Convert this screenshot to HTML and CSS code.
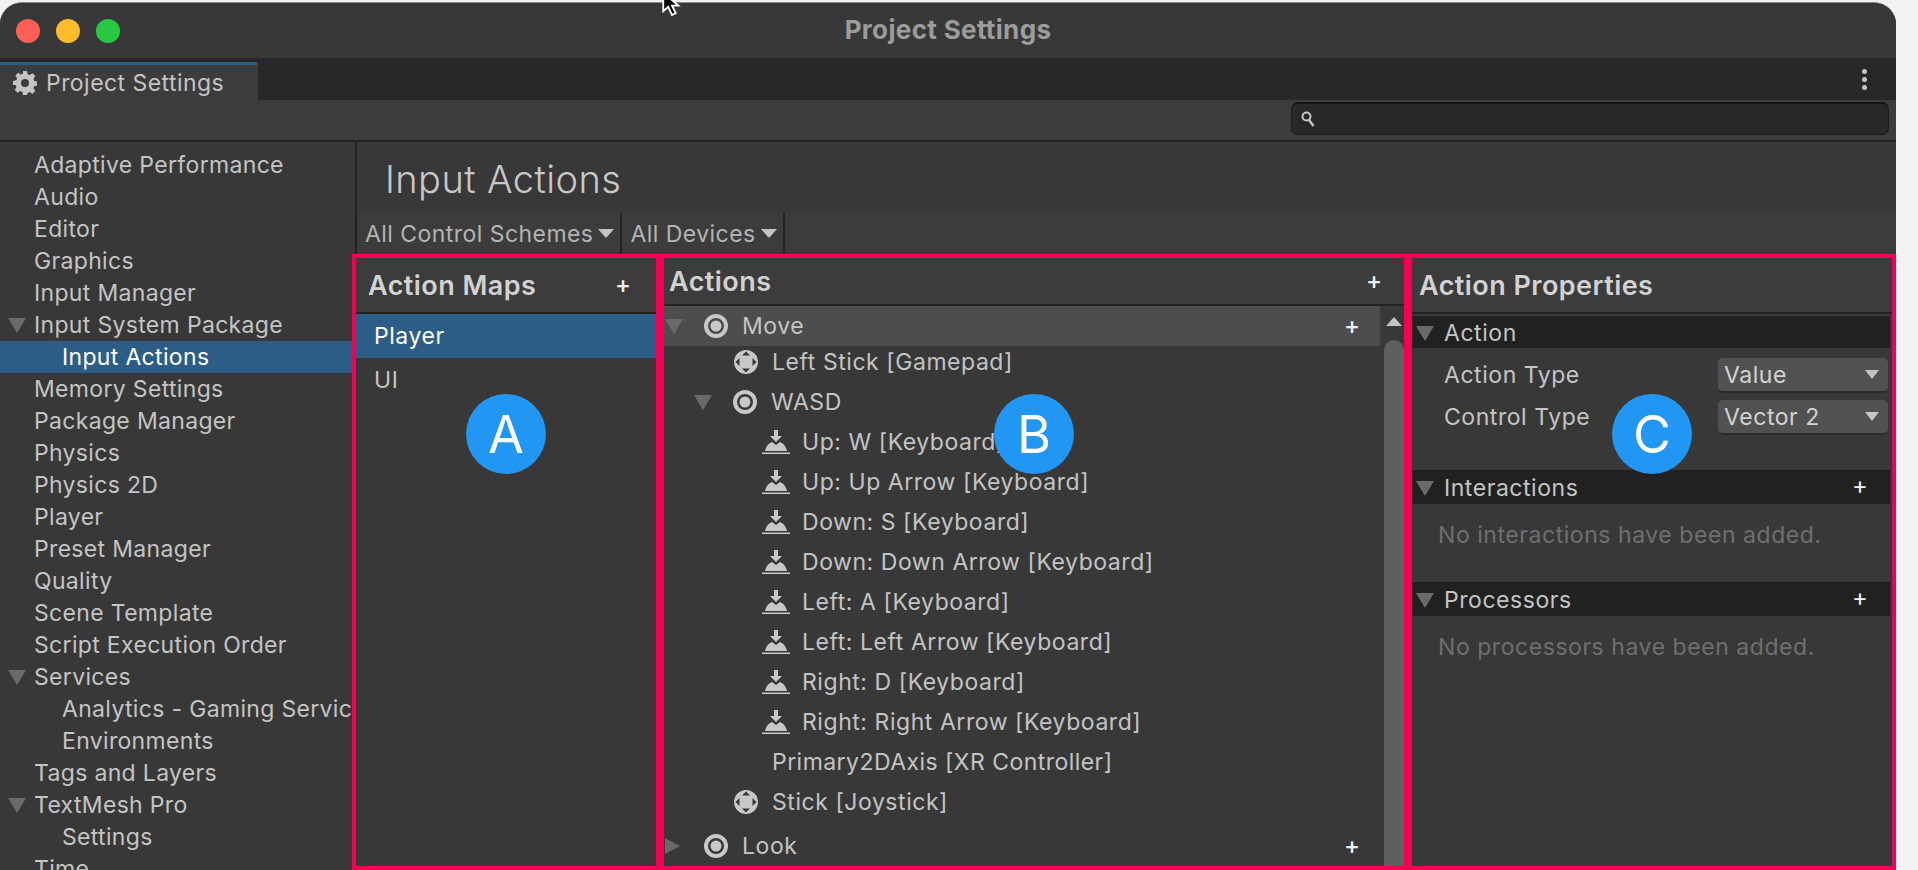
FILE: index.html
```html
<!DOCTYPE html>
<html lang="en">
<head>
    <meta charset="UTF-8">
    <title>Project Settings</title>
    <link rel="stylesheet" href="styles.css">
</head>
<body>
    <svg class="defs" width="0" height="0">
        <symbol id="i-ring" viewBox="0 0 24 24">
            <circle cx="12" cy="12" r="10" fill="none" stroke="#c8c8c8" stroke-width="4"/>
            <circle cx="12" cy="12" r="5.5" fill="#c8c8c8"/>
        </symbol>
        <symbol id="i-stick" viewBox="0 0 24 24">
            <circle cx="12" cy="12" r="12" fill="#c8c8c8"/>
            <path d="M12 1.500 16 5.500H8zM12 22.500 8 18.500h8zM1.500 12 5.500 8v8zM22.500 12 18.500 16V8z" fill="#383838"/>
        </symbol>
        <symbol id="i-key" viewBox="0 0 28 24">
            <path d="M12 0h4v6h4l-6 6-6-6h4z" fill="#c8c8c8"/>
            <path d="M3 21c1-5 4-8 7-9l4 3 4-3c3 1 6 4 7 9z" fill="#c8c8c8"/>
            <rect y="22.500" width="28" height="1.500" fill="#c8c8c8"/>
        </symbol>
    </svg>

    <div class="window">
        <div class="titlebar">
            <span class="light red"></span>
            <span class="light yellow"></span>
            <span class="light green"></span>
            <div class="title">Project Settings</div>
        </div>

        <div class="tabbar">
            <div class="tab">
                <svg class="gear" viewBox="0 0 24 24"><path fill-rule="evenodd" d="M10 0h4l.7 3.300 2 .8L19.500 2.300l2.800 2.800-1.800 2.800.8 2 3.300.7v4l-3.300.7-.8 2 1.800 2.800-2.800 2.800-2.800-1.800-2 .8L14 24h-4l-.7-3.300-2-.8-2.800 1.800-2.800-2.800 1.800-2.800-.8-2L0 14v-4l3.300-.7.8-2-1.800-2.800 2.800-2.800 2.800 1.800 2-.8zM12 8a4 4 0 1 0 0 8 4 4 0 0 0 0-8z" fill="#c4c4c4"/></svg>
                Project Settings
            </div>
            <div class="kebab"><i></i><i></i><i></i></div>
        </div>

        <div class="toolbar">
            <div class="search">
                <svg class="search-icon" viewBox="0 0 14 16"><circle cx="5.500" cy="5.500" r="4" fill="none" stroke="#c4c4c4" stroke-width="2"/><path d="M8 9l4.500 6" stroke="#c4c4c4" stroke-width="2.500"/></svg>
            </div>
        </div>

        <div class="main">
            <div class="sidebar">
                <div class="nav-item">Adaptive Performance</div>
                <div class="nav-item">Audio</div>
                <div class="nav-item">Editor</div>
                <div class="nav-item">Graphics</div>
                <div class="nav-item">Input Manager</div>
                <div class="nav-item"><span class="twirl down"></span>Input System Package</div>
                <div class="nav-item sub active">Input Actions</div>
                <div class="nav-item">Memory Settings</div>
                <div class="nav-item">Package Manager</div>
                <div class="nav-item">Physics</div>
                <div class="nav-item">Physics 2D</div>
                <div class="nav-item">Player</div>
                <div class="nav-item">Preset Manager</div>
                <div class="nav-item">Quality</div>
                <div class="nav-item">Scene Template</div>
                <div class="nav-item">Script Execution Order</div>
                <div class="nav-item"><span class="twirl down"></span>Services</div>
                <div class="nav-item sub">Analytics - Gaming Services</div>
                <div class="nav-item sub">Environments</div>
                <div class="nav-item">Tags and Layers</div>
                <div class="nav-item"><span class="twirl down"></span>TextMesh Pro</div>
                <div class="nav-item sub">Settings</div>
                <div class="nav-item">Time</div>
            </div>

            <div class="content">
                <div class="content-head">
                    <h1>Input Actions</h1>
                    <div class="filters">
                        <div class="filter first">All Control Schemes<span class="caret"></span></div>
                        <div class="filter">All Devices<span class="caret"></span></div>
                    </div>
                </div>

                <div class="panels">
                    <section class="panel maps">
                        <div class="panel-head">
                            <h2>Action Maps</h2>
                            <span class="plus">+</span>
                        </div>
                        <div class="map-item active">Player</div>
                        <div class="map-item">UI</div>
                        <span class="badge">A</span>
                    </section>

                    <section class="panel actions">
                        <div class="panel-head short">
                            <h2>Actions</h2>
                            <span class="plus">+</span>
                        </div>
                        <div class="tree-wrap">
                            <div class="tree">
                                <div class="row action active">
                                    <span class="slot"><span class="twirl down"></span></span>
                                    <svg class="ico"><use href="#i-ring"/></svg>
                                    <span>Move</span>
                                    <span class="plus">+</span>
                                </div>
                                <div class="bindings">
                                    <div class="row composite-child"><svg class="ico"><use href="#i-stick"/></svg><span>Left Stick [Gamepad]</span></div>
                                    <div class="row wasd">
                                        <span class="slot"><span class="twirl down"></span></span>
                                        <svg class="ico"><use href="#i-ring"/></svg>
                                        <span>WASD</span>
                                    </div>
                                    <div class="row key"><svg class="ico-key"><use href="#i-key"/></svg><span>Up: W [Keyboard]</span></div>
                                    <div class="row key"><svg class="ico-key"><use href="#i-key"/></svg><span>Up: Up Arrow [Keyboard]</span></div>
                                    <div class="row key"><svg class="ico-key"><use href="#i-key"/></svg><span>Down: S [Keyboard]</span></div>
                                    <div class="row key"><svg class="ico-key"><use href="#i-key"/></svg><span>Down: Down Arrow [Keyboard]</span></div>
                                    <div class="row key"><svg class="ico-key"><use href="#i-key"/></svg><span>Left: A [Keyboard]</span></div>
                                    <div class="row key"><svg class="ico-key"><use href="#i-key"/></svg><span>Left: Left Arrow [Keyboard]</span></div>
                                    <div class="row key"><svg class="ico-key"><use href="#i-key"/></svg><span>Right: D [Keyboard]</span></div>
                                    <div class="row key"><svg class="ico-key"><use href="#i-key"/></svg><span>Right: Right Arrow [Keyboard]</span></div>
                                    <div class="row plain">Primary2DAxis [XR Controller]</div>
                                    <div class="row composite-child"><svg class="ico"><use href="#i-stick"/></svg><span>Stick [Joystick]</span></div>
                                </div>
                                <div class="row action">
                                    <span class="slot"><span class="twirl right"></span></span>
                                    <svg class="ico"><use href="#i-ring"/></svg>
                                    <span>Look</span>
                                    <span class="plus">+</span>
                                </div>
                            </div>
                            <div class="scrollbar">
                                <span class="scroll-up"></span>
                                <div class="thumb"></div>
                            </div>
                        </div>
                        <span class="badge">B</span>
                    </section>

                    <section class="panel props">
                        <div class="panel-head">
                            <h2>Action Properties</h2>
                        </div>
                        <div class="band first">
                            <span class="twirl down"></span>Action
                        </div>
                        <div class="prop">
                            <span>Action Type</span>
                            <div class="select">Value<span class="caret"></span></div>
                        </div>
                        <div class="prop">
                            <span>Control Type</span>
                            <div class="select">Vector 2<span class="caret"></span></div>
                        </div>
                        <div class="band">
                            <span class="twirl down"></span>Interactions<span class="plus">+</span>
                        </div>
                        <p class="empty">No interactions have been added.</p>
                        <div class="band">
                            <span class="twirl down"></span>Processors<span class="plus">+</span>
                        </div>
                        <p class="empty">No processors have been added.</p>
                        <span class="badge">C</span>
                    </section>
                </div>
            </div>
        </div>
    </div>

    <svg class="cursor" viewBox="0 0 20 16"><path d="M1 -6 1 9 5 5.500 8 12 11 10.500 8 4.500 13 4.500z" fill="#000" stroke="#fff" stroke-width="1.500"/></svg>
</body>
</html>
```

FILE: styles.css
```css
* {
    box-sizing: border-box;
}

html, body {
    height: 100%;
}

body {
    margin: 0;
    background-color: #f2f2f2;
    font-family: Inter, "Noto Sans", sans-serif;
    font-size: 23px;
    letter-spacing: .55px;
    color: #c4c4c4;
    overflow: hidden;
}

.defs {
    position: absolute;
}

.window {
    width: 1896px;
    height: 868px;
    margin-top: 2px;
    display: flex;
    flex-direction: column;
    background-color: #383838;
    border-top: 1px solid #8a8a8a;
    border-radius: 22px 22px 0 0;
    overflow: hidden;
}

.cursor {
    position: absolute;
    left: 662px;
    top: 0;
    width: 25px;
    height: 20px;
}

/* title bar */
.titlebar {
    height: 55px;
    flex: none;
    display: flex;
    align-items: center;
    gap: 16px;
    padding: 0 0 2px 16px;
    background-color: #383838;
}

.light {
    width: 24px;
    height: 24px;
    margin-top: 2px;
    border-radius: 50%;
}

.red { background-color: #ff5f57; }
.yellow { background-color: #febc2e; }
.green { background-color: #28c840; }

.title {
    flex: 1;
    text-align: center;
    font-weight: 700;
    font-size: 26px;
    letter-spacing: .35px;
    color: #9c9c9c;
    padding-right: 136px;
}

/* tabs */
.tabbar {
    height: 42px;
    flex: none;
    display: flex;
    justify-content: space-between;
    background-color: #282828;
}

.tab {
    width: 258px;
    margin-top: 4px;
    padding-left: 13px;
    display: flex;
    align-items: center;
    gap: 9px;
    background-color: #3c3c3c;
    border-top: 3px solid #2c5d87;
    border-top-right-radius: 3px;
    letter-spacing: .45px;
}

.gear {
    width: 24px;
    height: 24px;
}

.kebab {
    display: flex;
    flex-direction: column;
    justify-content: center;
    gap: 3px;
    padding-right: 29px;
}

.kebab i {
    width: 5px;
    height: 5px;
    border-radius: 50%;
    background-color: #c4c4c4;
}

.toolbar {
    height: 42px;
    flex: none;
    padding: 2px 7px 0 0;
    display: flex;
    justify-content: flex-end;
    background-color: #3c3c3c;
    border-bottom: 2px solid #232323;
}

.search {
    width: 598px;
    height: 33px;
    padding-left: 9px;
    display: flex;
    align-items: center;
    background-color: #282828;
    border: 1px solid #1c1c1c;
    border-top: 2px solid #141414;
    border-radius: 7px;
}

.search-icon {
    width: 14px;
    height: 16px;
}

/* sidebar */
.main {
    flex: 1;
    display: flex;
    min-height: 0;
}

.sidebar {
    width: 352px;
    flex: none;
    padding-top: 7px;
    overflow: hidden;
    white-space: nowrap;
    letter-spacing: .33px;
}

.nav-item {
    height: 32px;
    line-height: 33px;
    padding-left: 34px;
    position: relative;
}

.nav-item.sub {
    padding-left: 62px;
}

.nav-item.active {
    background-color: #2c5d87;
    color: #fff;
}

.nav-item .twirl {
    position: absolute;
    left: 8px;
    top: 9px;
}

.twirl {
    display: inline-block;
    width: 0;
    height: 0;
}

.twirl.down {
    border-left: 9px solid transparent;
    border-right: 9px solid transparent;
    border-top: 15px solid #6a6a6a;
}

.twirl.right {
    border-top: 8px solid transparent;
    border-bottom: 8px solid transparent;
    border-left: 15px solid #6a6a6a;
}

/* content */
.content {
    flex: 1;
    display: flex;
    flex-direction: column;
    min-width: 0;
}

.content-head {
    height: 112px;
    flex: none;
    margin-left: 3px;
    border-left: 2px solid #232323;
    display: flex;
    flex-direction: column;
}

h1 {
    height: 71px;
    margin: 0;
    padding: 0 0 0 28px;
    line-height: 74px;
    font-size: 38px;
    font-weight: 300;
    letter-spacing: .4px;
    color: #c8c8c8;
}

.filters {
    flex: 1;
    display: flex;
    background-color: #3c3c3c;
    letter-spacing: .45px;
}

.filter {
    display: flex;
    align-items: center;
    padding: 0 6px 0 8px;
    border-right: 2px solid #232323;
    color: #b4b4b4;
}

.caret {
    width: 0;
    height: 0;
    margin-left: 5px;
    border-left: 8px solid transparent;
    border-right: 8px solid transparent;
    border-top: 9px solid #c4c4c4;
}

/* the three outlined panels */
.panels {
    flex: 1;
    min-height: 0;
    display: grid;
    grid-template-columns: 308px 748px 1fr;
}

.panel {
    position: relative;
    border: 4px solid #f50057;
    display: flex;
    flex-direction: column;
    min-width: 0;
    background-color: #383838;
}

.panel-head {
    height: 56px;
    flex: none;
    display: flex;
    align-items: center;
    justify-content: space-between;
    padding: 0 25px 0 12px;
    background-color: #3c3c3c;
    border-bottom: 2px solid #232323;
}

.panel-head.short {
    height: 48px;
    padding: 0 22px 0 5px;
}

.props .panel-head {
    padding-left: 7px;
}

h2 {
    margin: 0;
    font-size: 27px;
    font-weight: 600;
    letter-spacing: .45px;
    color: #d2d2d2;
}

.plus {
    font-size: 24px;
    font-weight: 500;
    line-height: 1;
    letter-spacing: 0;
    color: #eee;
}

.map-item {
    height: 44px;
    line-height: 44px;
    padding-left: 18px;
}

.map-item.active {
    background-color: #2c5d87;
    color: #fff;
}

.tree-wrap {
    flex: 1;
    min-height: 0;
    display: flex;
}

.tree {
    flex: 1;
    min-width: 0;
}

.row {
    height: 40px;
    display: flex;
    align-items: center;
    white-space: nowrap;
}

.row.action {
    padding: 0 20px 0 1px;
}

.row.action .plus {
    margin-left: auto;
}

.row.action.active {
    background-color: #4d4d4d;
}

.bindings {
    margin: -4px 0 4px;
}

.slot {
    width: 39px;
    flex: none;
    display: flex;
    align-items: center;
}

.ico {
    width: 24px;
    height: 24px;
    flex: none;
    margin-right: 14px;
}

.ico-key {
    width: 28px;
    height: 24px;
    flex: none;
    margin-right: 12px;
}

.row.composite-child {
    padding-left: 70px;
}

.row.wasd {
    padding-left: 30px;
}

.row.key {
    padding-left: 98px;
}

.row.plain {
    padding-left: 108px;
    letter-spacing: .45px;
}

.scrollbar {
    width: 24px;
    flex: none;
    padding-left: 4px;
    display: flex;
    flex-direction: column;
}

.scroll-up {
    flex: none;
    width: 0;
    height: 0;
    margin: 11px 0 14px 2px;
    border-left: 8px solid transparent;
    border-right: 8px solid transparent;
    border-bottom: 9px solid #c4c4c4;
}

.thumb {
    flex: 1;
    background-color: #5f5f5f;
    border-radius: 10px 10px 0 0;
}

/* properties */
.band {
    height: 34px;
    flex: none;
    margin-right: 2px;
    display: flex;
    align-items: center;
    padding: 2px 22px 0 4px;
    background-color: #212121;
}

.band.first {
    height: 32px;
    margin-top: 2px;
}

.band .twirl {
    margin-right: 10px;
}

.band .plus {
    margin-left: auto;
    font-weight: 400;
    margin-top: -4px;
}

.prop {
    height: 35px;
    flex: none;
    margin-top: 10px;
    display: flex;
    align-items: center;
    justify-content: space-between;
    padding: 0 4px 2px 32px;
}

.prop + .prop {
    margin-top: 7px;
    margin-bottom: 35px;
}

.select {
    width: 170px;
    height: 35px;
    flex: none;
    margin-bottom: -2px;
    display: flex;
    align-items: center;
    justify-content: space-between;
    padding: 0 9px 0 6px;
    background-color: #515151;
    border-bottom: 2px solid #2a2a2a;
    border-radius: 5px;
    color: #d2d2d2;
}

.select .caret {
    border-left-width: 7px;
    border-right-width: 7px;
}

.empty {
    height: 78px;
    margin: 0;
    padding: 16px 0 0 26px;
    line-height: 30px;
    color: #6f6f6f;
}

.badge {
    position: absolute;
    top: 136px;
    width: 80px;
    height: 80px;
    display: flex;
    align-items: center;
    justify-content: center;
    border-radius: 50%;
    background-color: #2196f3;
    color: #fff;
    font-size: 52px;
    letter-spacing: 0;
}

.maps .badge { left: 110px; }
.actions .badge { left: 330px; }
.props .badge { left: 200px; }
```
